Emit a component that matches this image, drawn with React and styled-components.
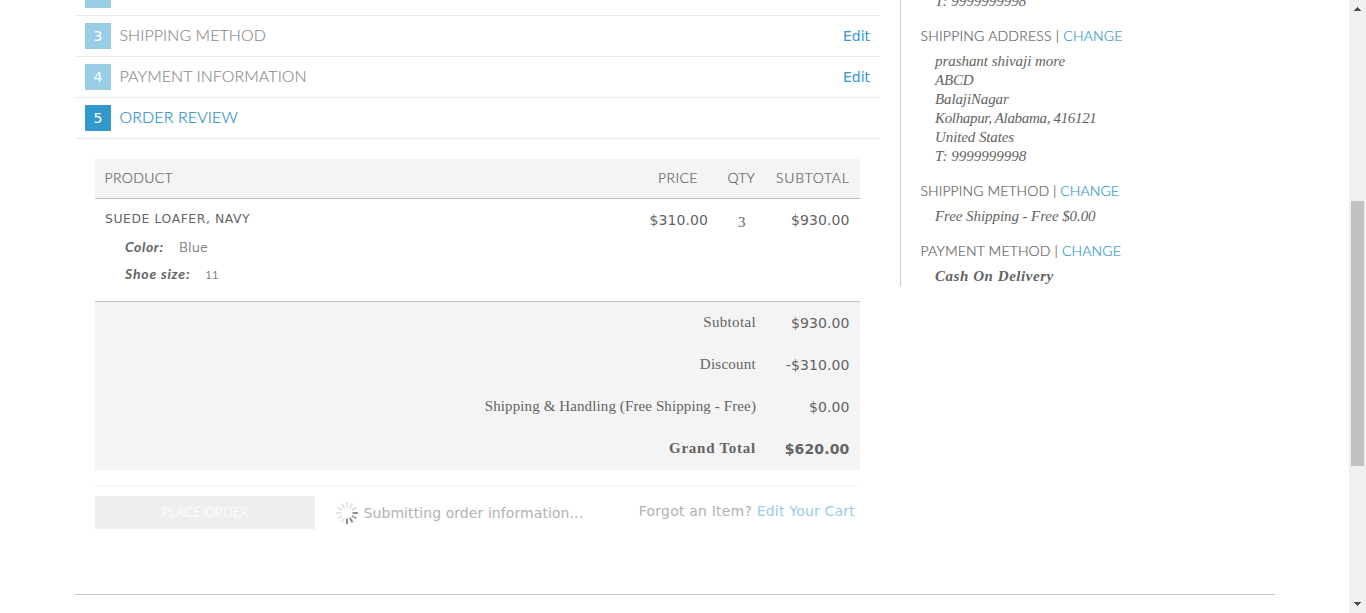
import React from "react";
import styled, { createGlobalStyle } from "styled-components";

const sans = `Lato, "Open Sans", sans-serif`;
const verdana = `"DejaVu Sans", Verdana, sans-serif`;
const georgia = `"Liberation Serif", Georgia, serif`;

const GlobalStyle = createGlobalStyle`
  * { box-sizing: border-box; }
  html, body { margin: 0; height: 613px; overflow: hidden; background: #fff; color: #636363; }
  a { color: #3399cc; text-decoration: none; }
`;

const Window = styled.div`
  display: flex;
  width: 1366px;
  height: 613px;
  overflow: hidden;
`;
const Page = styled.div`
  flex: 1;
  padding-left: 75px;
`;
const Columns = styled.div`
  display: flex;
  width: 1200px;
  height: 595px;
  border-bottom: 1px solid #c7c7c7;
`;
const Checkout = styled.main`
  width: 805px;
  margin-right: 20px;
`;
const Step = styled.div`
  display: flex;
  align-items: flex-start;
  height: ${(p) => (p.$cut ? 16 : 41)}px;
  padding: ${(p) => (p.$cut ? 0 : 7)}px 10px 0;
  border-bottom: 1px solid #ebebeb;
`;
const StepNumber = styled.span`
  width: 26px;
  height: ${(p) => (p.$cut ? 8 : 26)}px;
  margin-right: 8.5px;
  background: ${(p) => (p.$active ? "#3399cc" : "#99cce5")};
  color: #fff;
  font: 14px/26px ${verdana};
  text-align: center;
`;
const StepTitle = styled.h2`
  flex: 1;
  margin: 0;
  color: ${(p) => (p.$active ? "#3391c9" : "#8f8f8f")};
  font: 300 16px/23px ${sans};
  letter-spacing: ${(p) => p.$ls || 0}px;
  -webkit-text-stroke: 0.2px;
`;
const EditLink = styled.a`
  font: 14px/27px ${verdana};
  letter-spacing: -0.05px;
`;

const Review = styled.section`
  margin: 20px 20px 0;
`;
const Row = styled.div`
  display: grid;
  grid-template-columns: 1fr 74px 48px 94px;
`;
const HeadRow = styled(Row)`
  height: 40px;
  background: #f4f4f4;
  border-bottom: 1px solid #bfbfbf;
  font: 300 14px/38px ${sans};
  -webkit-text-stroke: 0.2px;
`;
const ItemRow = styled(Row)`
  height: 103px;
  border-bottom: 1px solid #bfbfbf;
`;
const HeadCell = styled.span`
  padding-left: ${(p) => p.$pad}px;
  letter-spacing: ${(p) => p.$ls || 0}px;
  white-space: nowrap;
`;
const Product = styled.div`
  padding: 10px 10px 0;
`;
const ProductName = styled.h3`
  margin: 0 0 4px;
  font: 12.4px/20px ${verdana};
  letter-spacing: 0.57px;
`;
const Option = styled.div`
  display: flex;
  padding-left: 20px;
  font: 14px/27px ${sans};
`;
const OptionLabel = styled.span`
  width: ${(p) => p.$w}px;
  font-size: 14px;
  font-style: italic;
  font-weight: 700;
  letter-spacing: ${(p) => p.$ls || 0}px;
`;
const OptionValue = styled.span`
  font-weight: 300;
  font-size: ${(p) => (p.$small ? 12 : 14)}px;
  letter-spacing: ${(p) => (p.$small ? -0.2 : 0.6)}px;
  line-height: ${(p) => (p.$small ? 29 : 27)}px;
  -webkit-text-stroke: 0.2px;
`;
const Amount = styled.span`
  padding-right: ${(p) => p.$pad ?? 10.5}px;
  font: ${(p) => (p.$bold ? 700 : 400)} 14px/42px ${verdana};
  letter-spacing: ${(p) => (p.$bold ? 0.15 : 0.08)}px;
  text-align: right;
  white-space: nowrap;
`;
const Qty = styled.span`
  padding-left: 20px;
  font: 15px/46px ${georgia};
`;
const Totals = styled.div`
  height: 168px;
  background: #f4f4f4;
`;
const TotalRow = styled.div`
  display: grid;
  grid-template-columns: 661px 104px;
  height: 42px;
`;
const TotalLabel = styled.span`
  font: ${(p) => (p.$bold ? 700 : 400)} 15px/41px ${georgia};
  letter-spacing: ${(p) => p.$ls || 0}px;
  text-align: right;
`;

const Actions = styled.div`
  display: flex;
  margin-top: 15px;
  padding-top: 10px;
  border-top: 1px solid #f5f5f5;
`;
const PlaceOrder = styled.button`
  width: 220px;
  height: 33px;
  margin-right: 21px;
  padding: 0;
  border: 0;
  background: #eee;
  color: #fbfbfb;
  font: 13px/33px ${sans};
`;
const Status = styled.span`
  display: flex;
  flex: 1;
  gap: 5.5px;
  color: #b1b1b1;
  font: 14px/35px ${verdana};
  letter-spacing: 0.08px;
  white-space: nowrap;
  svg { margin-top: 6px; }
`;
const Forgot = styled.span`
  padding-right: 5px;
  color: #b1b1b1;
  font: 14px/30px ${verdana};
  letter-spacing: 0.2px;
  white-space: nowrap;
  a { color: #99cce5; }
`;

const Progress = styled.aside`
  width: 300px;
  height: 286px;
  padding-left: 19.5px;
  border-left: 1px solid #ccc;
`;
const BlockTitle = styled.h3`
  margin: 0;
  font: 300 14px/20px ${sans};
  letter-spacing: ${(p) => p.$ls || 0}px;
  white-space: nowrap;
  -webkit-text-stroke: 0.2px;
`;
const Details = styled.div`
  margin-top: ${(p) => (p.$cut ? -8 : 0)}px;
  margin-left: 14.5px;
  padding-top: ${(p) => (p.$cut ? 0 : 6)}px;
  padding-bottom: 15px;
  font: italic ${(p) => (p.$bold ? 700 : 400)} 15px/19px ${georgia};
`;
const Line = styled.div`
  letter-spacing: ${(p) => p.$ls || 0}px;
  white-space: nowrap;
`;

const Scrollbar = styled.div`
  display: flex;
  flex-direction: column;
  align-items: center;
  justify-content: space-between;
  width: 17px;
  padding: 7px 0 7px;
  background: #f0f0f0;
`;
const Thumb = styled.div`
  width: 13px;
  height: 265px;
  margin-top: 54px;
  background: #c1c1c1;
`;

const steps = [
  { n: 3, title: "SHIPPING METHOD", edit: true, ls: 0.05 },
  { n: 4, title: "PAYMENT INFORMATION", edit: true, ls: 0.06 },
  { n: 5, title: "ORDER REVIEW", active: true, ls: 0.1 },
];
const totals = [
  { label: "Subtotal", value: "$930.00", ls: 0.35 },
  { label: "Discount", value: "-$310.00", ls: 0.25 },
  { label: "Shipping & Handling (Free Shipping - Free)", value: "$0.00", ls: 0.11 },
  { label: "Grand Total", value: "$620.00", bold: true, ls: 0.75 },
];
const address = [
  ["prashant shivaji more", -0.05],
  ["ABCD", -0.2],
  ["BalajiNagar", -0.12],
  ["Kolhapur, Alabama, 416121", -0.33],
  ["United States", -0.1],
  ["T: 9999999998", 0],
];
const spokes = ["#e3e3e3", "#e3e3e3", "#dcdcdc", "#8c8c8c", "#a0a0a0", "#8a8a8a", "#8a8a8a", "#e5e5e5", "#e5e5e5", "#e3e3e3", "#e3e3e3", "#e3e3e3"];

function Spinner() {
  return (
    <svg width="22" height="22" viewBox="-11 -11 22 22">
      {spokes.map((c, i) => (
        <path key={i} d="M0 -5.5V-11" stroke={c} strokeWidth="1.9" transform={`rotate(${i * 30})`} />
      ))}
    </svg>
  );
}

function Arrow({ down }) {
  return (
    <svg width="7" height="4" viewBox="0 0 7 4" shapeRendering="crispEdges">
      <path d={down ? "M0 0h7v1h-1v1h-1v1h-1v1h-1v-1h-1v-1h-1v-1h-1z" : "M3 0h1v1h1v1h1v1h1v1h-7v-1h1v-1h1v-1h1z"} fill="#505050" />
    </svg>
  );
}

export default function App() {
  return (
    <Window>
      <GlobalStyle />
      <Page>
        <Columns>
          <Checkout>
            <Step $cut><StepNumber $cut /></Step>
            {steps.map((s) => (
              <Step key={s.n}>
                <StepNumber $active={s.active}>{s.n}</StepNumber>
                <StepTitle $active={s.active} $ls={s.ls}>{s.title}</StepTitle>
                {s.edit && <EditLink>Edit</EditLink>}
              </Step>
            ))}
            <Review>
              <HeadRow>
                <HeadCell $pad={9.5} $ls={0.35}>PRODUCT</HeadCell>
                <HeadCell $pad={14} $ls={0.4}>PRICE</HeadCell>
                <HeadCell $pad={9.5} $ls={0.2}>QTY</HeadCell>
                <HeadCell $pad={10} $ls={0.75}>SUBTOTAL</HeadCell>
              </HeadRow>
              <ItemRow>
                <Product>
                  <ProductName>SUEDE LOAFER, NAVY</ProductName>
                  <Option><OptionLabel $w={54} $ls={0.6}>Color:</OptionLabel><OptionValue>Blue</OptionValue></Option>
                  <Option><OptionLabel $w={80} $ls={0.8}>Shoe size:</OptionLabel><OptionValue $small>11</OptionValue></Option>
                </Product>
                <Amount $pad={10}>$310.00</Amount>
                <Qty>3</Qty>
                <Amount>$930.00</Amount>
              </ItemRow>
              <Totals>
                {totals.map((t) => (
                  <TotalRow key={t.label}>
                    <TotalLabel $bold={t.bold} $ls={t.ls}>{t.label}</TotalLabel>
                    <Amount $bold={t.bold}>{t.value}</Amount>
                  </TotalRow>
                ))}
              </Totals>
              <Actions>
                <PlaceOrder>PLACE ORDER</PlaceOrder>
                <Status><Spinner />Submitting order information...</Status>
                <Forgot>Forgot an Item? <a>Edit Your Cart</a></Forgot>
              </Actions>
            </Review>
          </Checkout>
          <Progress>
            <Details $cut><Line>T: 9999999998</Line></Details>
            <BlockTitle $ls={0.21}>SHIPPING ADDRESS | <a>CHANGE</a></BlockTitle>
            <Details>
              {address.map(([text, ls]) => <Line key={text} $ls={ls}>{text}</Line>)}
            </Details>
            <BlockTitle $ls={0.08}>SHIPPING METHOD | <a>CHANGE</a></BlockTitle>
            <Details><Line $ls={-0.08}>Free Shipping - Free $0.00</Line></Details>
            <BlockTitle $ls={0.14}>PAYMENT METHOD | <a>CHANGE</a></BlockTitle>
            <Details $bold><Line $ls={0.55}>Cash On Delivery</Line></Details>
          </Progress>
        </Columns>
      </Page>
      <Scrollbar>
        <Arrow />
        <Thumb />
        <Arrow down />
      </Scrollbar>
    </Window>
  );
}
